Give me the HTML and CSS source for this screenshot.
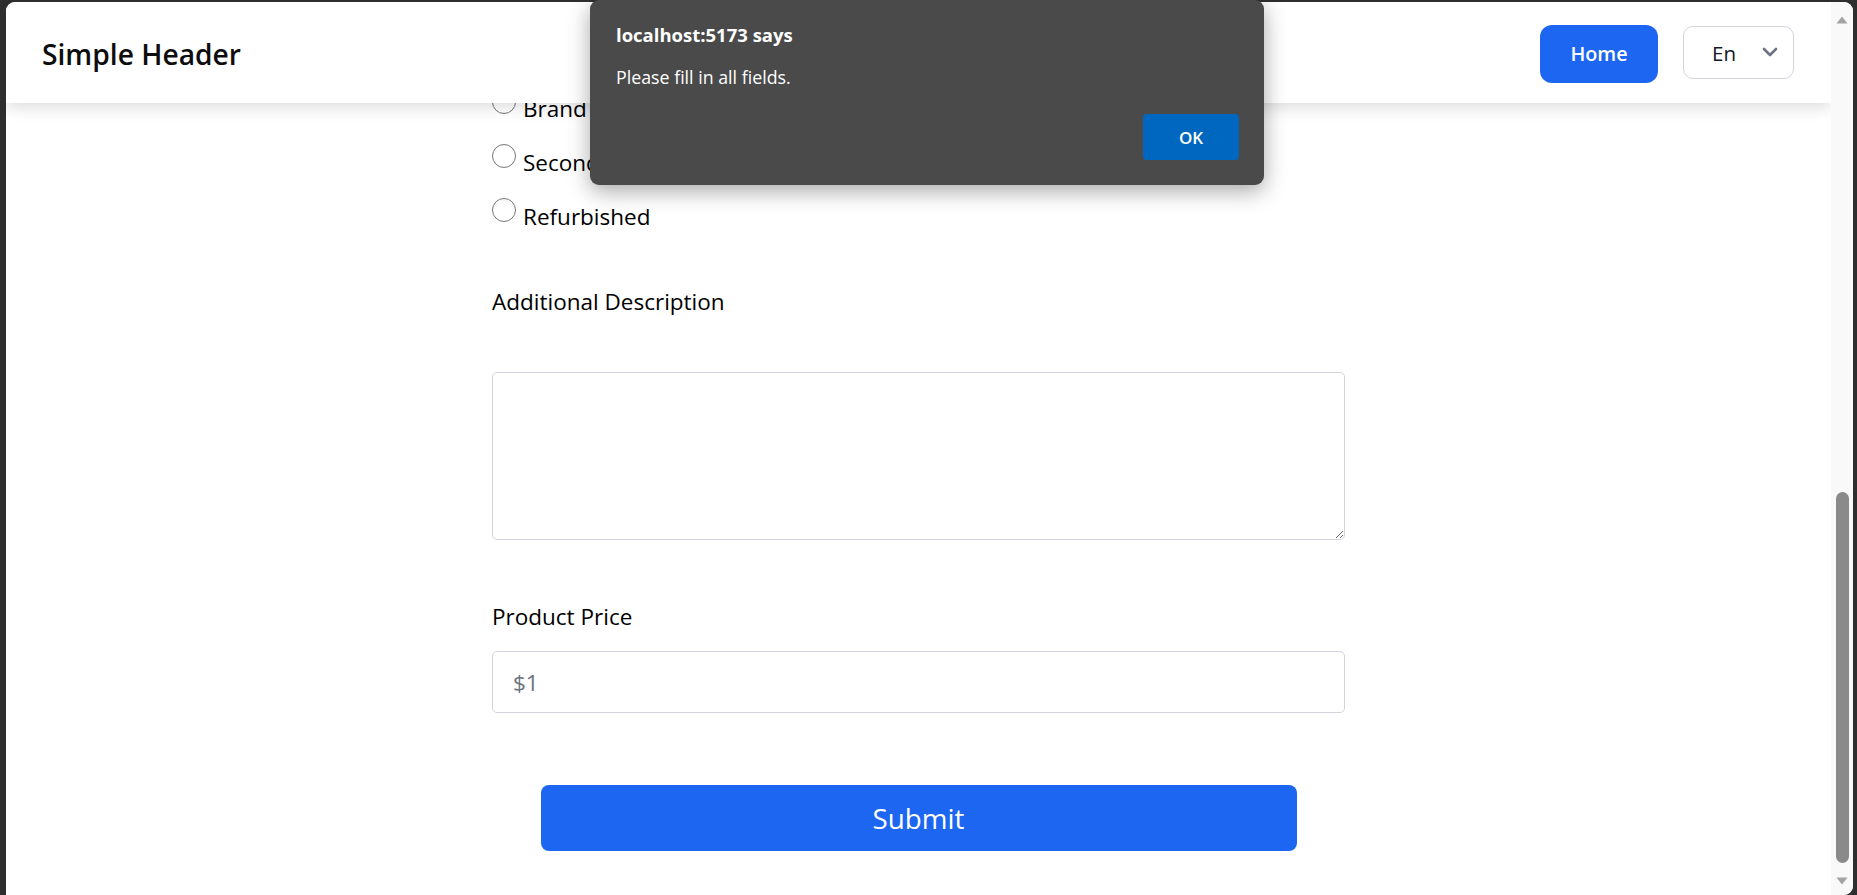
FILE: index.html
```html
<!DOCTYPE html>
<html lang="en">
<head>
<meta charset="utf-8">
<title>Simple Header</title>
<link rel="stylesheet" href="styles.css">
</head>
<body>
<div class="window">
  <div class="viewport">
    <header class="topbar">
      <div class="brand">Simple Header</div>
      <nav class="actions">
        <button class="home-btn" type="button">Home</button>
        <div class="lang-select">
          <span class="lang-label">En</span>
          <svg class="chev" width="16" height="10" viewBox="0 0 16 10"><path d="M2 2 L8 8 L14 2" fill="none" stroke="#6b7280" stroke-width="2.6" stroke-linecap="round" stroke-linejoin="round"/></svg>
        </div>
      </nav>
    </header>
    <main class="page">
      <form class="form">
        <div class="radios">
          <label class="radio-row"><input class="radio" type="radio" name="cond"><span>Brand New</span></label>
          <label class="radio-row"><input class="radio" type="radio" name="cond"><span>Second Hand</span></label>
          <label class="radio-row"><input class="radio" type="radio" name="cond"><span>Refurbished</span></label>
        </div>
        <label class="field-label desc-label">Additional Description</label>
        <textarea class="textarea"></textarea>
        <label class="field-label price-label">Product Price</label>
        <input class="text-input" type="text" placeholder="$1">
        <button class="submit" type="button">Submit</button>
      </form>
    </main>
  </div>
  <div class="scrollbar">
    <svg class="sb-arrow" width="12" height="8" viewBox="0 0 12 8"><path d="M6 0.5 L11.5 7.5 L0.5 7.5 Z" fill="#a3a3a3"/></svg>
    <div class="sb-thumb"></div>
    <svg class="sb-arrow sb-down" width="12" height="8" viewBox="0 0 12 8"><path d="M0.5 0.5 L11.5 0.5 L6 7.5 Z" fill="#a3a3a3"/></svg>
  </div>
</div>
<div class="alert" role="alertdialog">
  <div class="alert-title">localhost:5173 says</div>
  <div class="alert-msg">Please fill in all fields.</div>
  <div class="alert-actions"><button class="ok-btn" type="button">OK</button></div>
</div>
</body>
</html>
```
FILE: styles.css
```css
* { box-sizing: border-box; }

html, body {
  margin: 0;
  height: 895px;
  overflow: hidden;
}

body {
  background: #2e2e2e;
  font-family: "Open Sans", "Noto Sans", sans-serif;
  color: #000;
  padding: 2px 4px 0 6px;
}

.window {
  height: 893px;
  background: #fff;
  border-radius: 9px 9px 9px 0;
  overflow: hidden;
  display: flex;
}

.viewport {
  flex: 1;
  position: relative;
  overflow: hidden;
}

/* header */
.topbar {
  position: absolute;
  top: 0;
  left: 0;
  right: 0;
  height: 101px;
  background: #fff;
  box-shadow: 0 5px 14px rgba(0, 0, 0, 0.13);
  display: flex;
  align-items: center;
  justify-content: space-between;
  padding: 0 37px 0 36px;
  z-index: 2;
}

.brand {
  font-size: 28.2px;
  font-weight: 600;
  color: #0d0d0d;
  margin-top: 2px;
}

.actions {
  display: flex;
  align-items: center;
  gap: 25px;
}

.home-btn {
  width: 118px;
  height: 58px;
  border: none;
  border-radius: 12px;
  background: #1d66f2;
  color: #fff;
  font-family: inherit;
  font-size: 19.8px;
  font-weight: 600;
  margin-top: 2px;
}

.lang-select {
  width: 111px;
  height: 53px;
  border: 1.5px solid #d1d5db;
  border-radius: 10px;
  display: flex;
  align-items: center;
  justify-content: space-between;
  padding: 0 15px 0 28px;
  background: #fff;
}

.lang-label {
  font-size: 20.5px;
  color: #111827;
  margin-top: 1px;
}

.chev { display: block; margin-top: -2px; }

/* page content (scrolled) */
.page {
  padding-top: 90.5px;
}

.form {
  width: 853px;
  margin: 0 auto;
  display: flex;
  flex-direction: column;
}

.radios {
  display: flex;
  flex-direction: column;
  gap: 22px;
}

.radio-row {
  display: flex;
  align-items: flex-start;
  height: 32px;
  line-height: 32px;
  font-size: 22.5px;
  white-space: nowrap;
}

.radio {
  appearance: none;
  -webkit-appearance: none;
  width: 24px;
  height: 24px;
  margin: -2.5px 7px 0 0;
  border: 1.3px solid #767676;
  border-radius: 50%;
  background: #fff;
  flex: none;
}

.field-label {
  display: block;
  font-size: 22.5px;
  line-height: 32px;
  color: #000;
}

.desc-label { margin-top: 53px; }

.textarea {
  display: block;
  margin-top: 54.5px;
  width: 100%;
  height: 168px;
  border: 1px solid #d1d5db;
  border-radius: 5px;
  font-family: inherit;
  font-size: 22.5px;
}

.price-label { margin-top: 61px; }

.text-input {
  display: block;
  margin-top: 18px;
  width: 100%;
  height: 62px;
  border: 1px solid #d1d5db;
  border-radius: 5px;
  padding: 0 20px;
  font-family: inherit;
  font-size: 22.5px;
  color: #111;
}

.text-input::placeholder { color: #6b7280; }

.submit {
  margin-top: 72px;
  align-self: center;
  width: 756px;
  height: 66px;
  border: none;
  border-radius: 8px;
  background: #1d66f2;
  color: #fff;
  font-family: inherit;
  font-size: 27.8px;
  font-weight: 400;
}

/* scrollbar */
.scrollbar {
  width: 22px;
  flex: none;
  background: #f9f9f9;
  display: flex;
  flex-direction: column;
  align-items: center;
  padding-top: 14px;
}

.sb-arrow { display: block; flex: none; }

.sb-thumb {
  margin-top: 468px;
  width: 13px;
  height: 371px;
  border-radius: 7px;
  background: #8a8a8a;
  flex: none;
}

.sb-down { margin-top: 14px; }

/* alert dialog */
.alert {
  position: absolute;
  top: 0;
  left: 590px;
  width: 674px;
  height: 185px;
  background: #4a4a4a;
  border-radius: 9px;
  box-shadow: 0 6px 22px rgba(0, 0, 0, 0.35);
  padding: 23px 25px 25px 26px;
  color: #fff;
  z-index: 10;
}

.alert-title {
  font-size: 18.5px;
  font-weight: 700;
  line-height: 24px;
}

.alert-msg {
  margin-top: 18px;
  font-size: 17.8px;
  line-height: 24px;
}

.alert-actions {
  display: flex;
  justify-content: flex-end;
  margin-top: 25px;
}

.ok-btn {
  width: 96px;
  height: 46px;
  border: none;
  border-radius: 4px;
  background: #0067c0;
  color: #fff;
  font-family: inherit;
  font-size: 17px;
  font-weight: 600;
}
```
